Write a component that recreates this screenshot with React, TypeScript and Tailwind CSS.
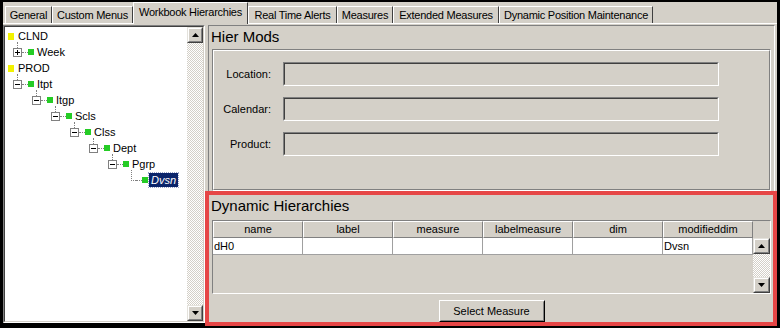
import React from 'react';

type TreeNode = {
  label: string;
  kind: 'root' | 'plus' | 'minus' | 'leaf';
  indent: string;
  selected?: boolean;
};

const treeNodes: TreeNode[] = [
  { label: 'CLND', kind: 'root', indent: 'pl-[3px]' },
  { label: 'Week', kind: 'plus', indent: 'pl-[8px]' },
  { label: 'PROD', kind: 'root', indent: 'pl-[3px]' },
  { label: 'Itpt', kind: 'minus', indent: 'pl-[8px]' },
  { label: 'Itgp', kind: 'minus', indent: 'pl-[27px]' },
  { label: 'Scls', kind: 'minus', indent: 'pl-[46px]' },
  { label: 'Clss', kind: 'minus', indent: 'pl-[65px]' },
  { label: 'Dept', kind: 'minus', indent: 'pl-[84px]' },
  { label: 'Pgrp', kind: 'minus', indent: 'pl-[103px]' },
  { label: 'Dvsn', kind: 'leaf', indent: 'pl-[122px]', selected: true },
];

const tabs = [
  { label: 'General', w: 'w-[47px]' },
  { label: 'Custom Menus', w: 'w-[81px]' },
  { label: 'Workbook Hierarchies', w: 'w-[115px]', active: true },
  { label: 'Real Time Alerts', w: 'w-[89px]' },
  { label: 'Measures', w: 'w-[56px]' },
  { label: 'Extended Measures', w: 'w-[106px]' },
  { label: 'Dynamic Position Maintenance', w: 'w-[154px]' },
];

const columns = ['name', 'label', 'measure', 'labelmeasure', 'dim', 'modifieddim'];
const rowValues = ['dH0', '', '', '', '', 'Dvsn'];

const Arrow = ({ up }: { up?: boolean }) => (
  <svg width="7" height="4" viewBox="0 0 7 4">
    <path d={up ? 'M3.5 0L7 4H0Z' : 'M0 0H7L3.5 4Z'} fill="#000" />
  </svg>
);

const Raised = ({ className = '', children }: { className?: string; children?: React.ReactNode }) => (
  <div className={`border border-t-[#e4e2dc] border-l-[#e4e2dc] border-r-[#404040] border-b-[#404040] ${className}`}>
    <div className="flex h-full w-full items-center justify-center border border-t-white border-l-white border-r-[#808080] border-b-[#808080] bg-[#d4d0c8]">
      {children}
    </div>
  </div>
);

const ScrollBar = ({ className = '' }: { className?: string }) => (
  <div className={`flex flex-col ${className}`}>
    <Raised className="h-4 shrink-0">
      <Arrow up />
    </Raised>
    <div className="flex-1 bg-[image:repeating-conic-gradient(#ffffff_0%_25%,#d4d0c8_0%_50%)] bg-[length:2px_2px]" />
    <Raised className="h-4 shrink-0">
      <Arrow />
    </Raised>
  </div>
);

const Expander = ({ open }: { open: boolean }) => (
  <div className="relative h-[9px] w-[9px] border border-[#808080] bg-white">
    <span className="absolute left-[1px] top-[3px] h-px w-[5px] bg-black" />
    {!open && <span className="absolute left-[3px] top-[1px] h-[5px] w-px bg-black" />}
  </div>
);

const TreeRow = ({ node }: { node: TreeNode }) => {
  if (node.kind === 'root') {
    return (
      <div className={`flex h-4 items-center ${node.indent}`}>
        <span className="h-[7px] w-[6px] bg-[#f2f200]" />
        <span className="ml-[2px] px-[2px] leading-[14px]">{node.label}</span>
      </div>
    );
  }
  return (
    <div className={`flex h-4 items-center ${node.indent}`}>
      <div className="relative h-[9px] w-[9px]">
        {node.kind === 'leaf' ? (
          <>
            <span className="absolute bottom-[4px] left-[4px] h-[11px] border-l border-dotted border-[#808080]" />
            <span className="absolute left-[4px] top-[4px] w-[5px] border-t border-dotted border-[#808080]" />
          </>
        ) : (
          <>
            <span className="absolute bottom-[9px] left-[4px] h-[6px] border-l border-dotted border-[#808080]" />
            <Expander open={node.kind === 'minus'} />
          </>
        )}
      </div>
      <span className="w-[6px] border-t border-dotted border-[#808080]" />
      <span className="h-[6px] w-[6px] bg-[#25cc25]" />
      <span
        className={`ml-px px-[2px] leading-[14px] ${
          node.selected ? 'bg-[#0a246a] italic text-white outline outline-1 outline-dotted outline-[#9aa4c8]' : ''
        }`}
      >
        {node.label}
      </span>
    </div>
  );
};

const Sunken = ({ className = '', children }: { className?: string; children?: React.ReactNode }) => (
  <div className={`border border-t-[#808080] border-l-[#808080] border-r-white border-b-white ${className}`}>
    <div className="h-full w-full border border-t-[#404040] border-l-[#404040] border-r-[#d4d0c8] border-b-[#d4d0c8]">
      {children}
    </div>
  </div>
);

const Field = ({ label }: { label: string }) => (
  <div className="flex h-6 items-center">
    <span className="w-[57px] text-right">{label}</span>
    <Sunken className="ml-[12px] h-6 w-[436px]" />
  </div>
);

export default function App() {
  return (
    <div className="relative h-[328px] w-[780px] overflow-hidden bg-black pb-[5px] pl-[3px] pr-[3px] pt-[2px] font-['Liberation_Sans',Arial,sans-serif] text-[11px] text-black">
      <div className="flex h-full flex-col bg-[#d4d0c8]">
        {/* Tabs */}
        <div className="flex h-[21px] items-end pl-[2px] tracking-[-0.25px]">
          {tabs.map((t) =>
            t.active ? (
              <div
                key={t.label}
                className={`relative z-10 -mb-px flex h-[22px] items-center justify-center whitespace-nowrap border-l border-t border-r border-l-white border-t-white border-r-[#404040] bg-[#d4d0c8] pb-[2px] ${t.w}`}
              >
                {t.label}
              </div>
            ) : (
              <div
                key={t.label}
                className={`flex h-[17px] items-center justify-center whitespace-nowrap border-l border-t border-r border-l-white border-t-white border-r-[#404040] ${t.w}`}
              >
                {t.label}
              </div>
            )
          )}
        </div>

        {/* Content */}
        <div className="flex flex-1 border-t border-t-white pt-px">
          {/* Tree */}
          <Sunken className="h-full w-[202px] bg-white">
            <div className="flex h-full">
              <div className="flex-1 pt-px">
                {treeNodes.map((n) => (
                  <TreeRow key={n.label} node={n} />
                ))}
              </div>
              <ScrollBar className="w-4" />
            </div>
          </Sunken>

          {/* Right panel */}
          <div className="ml-[3px] flex h-full w-[567px] flex-col border border-t-[#808080] border-l-[#808080] border-r-white border-b-white">
            <div className="h-[22px] pl-[2px] text-[15px] leading-[22px]">Hier Mods</div>
            <div className="mx-[3px] mt-px h-[142px] border border-t-[#808080] border-l-[#808080] border-r-white border-b-white">
              <div className="flex h-full flex-col gap-[11px] border border-t-white border-l-white border-r-[#808080] border-b-[#808080] pt-[11px]">
                <Field label="Location:" />
                <Field label="Calendar:" />
                <Field label="Product:" />
              </div>
            </div>

            {/* Dynamic Hierarchies */}
            <div className="flex flex-1 flex-col pt-[4px]">
              <div className="h-[22px] pl-[2px] text-[15px] leading-[22px]">Dynamic Hierarchies</div>
              <div className="mx-[3px] mt-[3px] flex h-[74px] border border-t-[#808080] border-l-[#808080] border-r-white border-b-white">
                <div className="w-[540px]">
                  <div className="flex h-[17px]">
                    {columns.map((c) => (
                      <div
                        key={c}
                        className="flex w-[90px] items-center justify-center border border-t-white border-l-white border-r-[#808080] border-b-[#808080]"
                      >
                        {c}
                      </div>
                    ))}
                  </div>
                  <div className="flex h-[17px]">
                    {rowValues.map((v, i) => (
                      <div key={i} className="flex w-[90px] items-center border-b border-r border-[#a0a0a0] bg-white pl-px">
                        {v}
                      </div>
                    ))}
                  </div>
                </div>
                <div className="flex w-[17px] flex-col">
                  <div className="h-[17px]" />
                  <ScrollBar className="flex-1" />
                </div>
              </div>
              <div className="mt-[6px] flex justify-center">
                <div className="h-[22px] w-[106px] border border-t-white border-l-white border-r-black border-b-black">
                  <div className="flex h-full items-center justify-center border border-transparent border-r-[#808080] border-b-[#808080]">
                    Select Measure
                  </div>
                </div>
              </div>
            </div>
          </div>
        </div>
      </div>

      {/* highlight annotation */}
      <div className="pointer-events-none absolute left-[205px] top-[191px] h-[135px] w-[572px] border-4 border-[#e64646]" />
    </div>
  );
}
